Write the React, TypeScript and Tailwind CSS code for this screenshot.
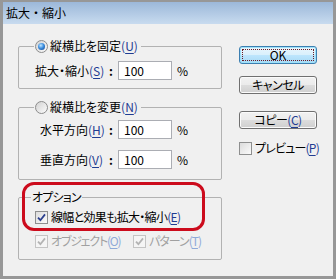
import React from "react";

// Windows 7 style "拡大・縮小" (scale) dialog

function Mn({ k, disabled }: { k: string; disabled?: boolean }) {
  return (
    <span className={disabled ? "text-[#8fa9d8]" : "text-[#1f3c92]"}>
      (<span className="underline underline-offset-[2px]">{k}</span>)
    </span>
  );
}

function Radio({ checked }: { checked?: boolean }) {
  return (
    <span className="w-[13px] h-[13px] shrink-0 rounded-full border border-[#8c8c8c] bg-gradient-to-br from-[#d2d2d2] to-[#fcfcfc] flex items-center justify-center">
      {checked && (
        <span className="w-[7px] h-[7px] rounded-full bg-[radial-gradient(circle_at_40%_35%,#c4e8ff_0%,#3d8fe0_45%,#113c82_100%)]" />
      )}
    </span>
  );
}

function Check({ checked, disabled }: { checked?: boolean; disabled?: boolean }) {
  return (
    <span
      className={
        disabled
          ? "w-[13px] h-[13px] shrink-0 border border-[#c4c4c4] bg-[#f5f5f5] flex items-center justify-center"
          : "w-[13px] h-[13px] shrink-0 border border-[#8e8f8f] bg-gradient-to-br from-[#dcdcdc] to-[#fbfbfb] flex items-center justify-center"
      }
    >
      {checked && (
        <svg width="9" height="9" viewBox="0 0 9 9">
          <path
            d="M1 4.6 L3.4 7.2 L8 1.4"
            fill="none"
            stroke={disabled ? "#b3b3b3" : "#2b3f8e"}
            strokeWidth="1.8"
          />
        </svg>
      )}
    </span>
  );
}

function Num() {
  return (
    <div className="w-[54px] h-[19px] border border-[#abadb3] bg-white pl-[5px] flex items-center leading-none">
      100
    </div>
  );
}

function Field({ label, k, labelW }: { label: string; k: string; labelW: string }) {
  return (
    <div className="flex items-center h-[19px]">
      <span className={`${labelW} flex items-center whitespace-nowrap`}>
        <span>
          {label}
          <Mn k={k} />
        </span>
        <span className="ml-auto mr-[5px] font-bold">:</span>
      </span>
      <Num />
      <span className="ml-[5px]">%</span>
    </div>
  );
}

function Button({ children, primary }: { children: React.ReactNode; primary?: boolean }) {
  if (primary) {
    return (
      <button
        type="button"
        className="relative h-[18px] w-full rounded-[3px] border border-[#3c7fb1] bg-[linear-gradient(#eaf6fd_0%,#d9f0fc_50%,#bee6fd_50%,#a7d9f5_100%)] shadow-[inset_0_0_0_1px_#9fe0f8] flex items-center justify-center leading-none"
      >
        <span className="absolute inset-[2px] border border-dotted border-[#6a1c24]" />
        {children}
      </button>
    );
  }
  return (
    <button
      type="button"
      className="h-[18px] w-full rounded-[3px] border border-[#707070] bg-[linear-gradient(#f2f2f2_0%,#ebebeb_50%,#dddddd_50%,#cfcfcf_100%)] shadow-[inset_0_0_0_1px_#fbfbfb] flex items-center justify-center leading-none whitespace-nowrap tracking-[-0.5px]"
    >
      {children}
    </button>
  );
}

export default function App() {
  return (
    <div className="w-[336px] h-[279px] bg-[#979797] pt-[2px] px-[3px] pb-[3px] flex flex-col font-['Noto_Sans_CJK_JP',sans-serif] text-[12px] leading-[16px] text-black [font-feature-settings:'palt']">
      <div className="h-[22px] shrink-0 bg-gradient-to-b from-[#9cb8d9] to-[#c8dbef] pl-[3px] flex items-center [font-feature-settings:normal]">
        拡大・縮小
      </div>

      <div className="relative flex-1 bg-[#f0f0f0] flex items-start pl-[15px] pt-[14px]">
        <div className="w-[204px] flex flex-col">
          <fieldset className="border border-[#b2b2b2] rounded-[2px] pl-[16px] pb-[8px]">
            <legend className="ml-[-1px] pl-[1px] pr-[3px]">
              <span className="flex items-center gap-[2px] h-[16px] whitespace-nowrap">
                <Radio checked />
                <span>
                  縦横比を固定
                  <Mn k="U" />
                </span>
              </span>
            </legend>
            <div className="mt-[7px]">
              <Field label="拡大・縮小" k="S" labelW="w-[83px]" />
            </div>
          </fieldset>

          <fieldset className="mt-[10px] border border-[#b2b2b2] rounded-[2px] pl-[21px] pb-[10px]">
            <legend className="ml-[-6px] pl-[1px] pr-[3px]">
              <span className="flex items-center gap-[2px] h-[16px] whitespace-nowrap">
                <Radio />
                <span>
                  縦横比を変更
                  <Mn k="N" />
                </span>
              </span>
            </legend>
            <div className="mt-[5px] flex flex-col gap-[11px]">
              <Field label="水平方向" k="H" labelW="w-[78px]" />
              <Field label="垂直方向" k="V" labelW="w-[78px]" />
            </div>
          </fieldset>

          <fieldset className="mt-[9px] border border-[#b2b2b2] rounded-[2px] pl-[16px] pb-[10px]">
            <legend className="ml-[-4px] px-[1px] h-[16px] tracking-[-0.8px]">オプション</legend>
            <div className="mt-[4px] flex items-center gap-[3px] h-[16px] whitespace-nowrap">
              <Check checked />
              <span className="tracking-[-0.7px]">
                線幅と効果も拡大・縮小
                <Mn k="E" />
              </span>
            </div>
            <div className="mt-[8px] flex items-center h-[16px] text-[#a0a0a0] whitespace-nowrap">
              <span className="w-[98px] flex items-center gap-[3px]">
                <Check checked disabled />
                <span className="tracking-[-1.2px]">
                  オブジェクト
                  <Mn k="O" disabled />
                </span>
              </span>
              <span className="flex items-center gap-[3px]">
                <Check checked disabled />
                <span className="tracking-[-1px]">
                  パターン
                  <Mn k="T" disabled />
                </span>
              </span>
            </div>
          </fieldset>
        </div>

        <div className="ml-[17px] mt-[8px] w-[78px] flex flex-col">
          <Button primary>OK</Button>
          <div className="mt-[12px]">
            <Button>キャンセル</Button>
          </div>
          <div className="mt-[17px]">
            <Button>
              コピー
              <Mn k="C" />
            </Button>
          </div>
          <div className="mt-[11px] flex items-center gap-[3px] h-[16px] whitespace-nowrap">
            <Check />
            <span className="tracking-[-0.8px]">
              プレビュー
              <Mn k="P" />
            </span>
          </div>
        </div>

        {/* red highlight drawn over the options group */}
        <div className="absolute left-[19px] top-[158px] w-[183px] h-[49px] border-[3px] border-[#cc0b1c] rounded-[12px] pointer-events-none" />
      </div>
    </div>
  );
}
